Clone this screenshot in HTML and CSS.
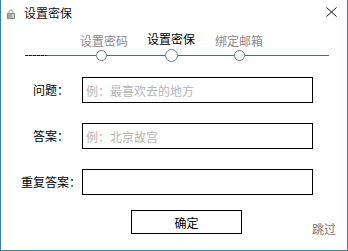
FILE: index.html
```html
<!DOCTYPE html>
<html lang="zh">
<head>
<meta charset="utf-8">
<link rel="stylesheet" href="styles.css">
</head>
<body>
<div class="window">
  <div class="titlebar">
    <svg class="lock" width="8" height="10" viewBox="0 0 8 10">
      <path d="M2 5 V3 A2 2 0 0 1 6 3 V5" fill="none" stroke="#9a9a9a" stroke-width="1"/>
      <rect x="0.5" y="4.5" width="7" height="5" fill="#a8a8a8" stroke="#8a8a8a" stroke-width="1"/>
      <rect x="5" y="5" width="2" height="4" fill="#d0d0d0"/>
    </svg>
    <span class="title">设置密保</span>
    <svg class="close" width="11" height="10" viewBox="0 0 11 10">
      <path d="M0.5 0.5 L10.5 9.5 M10.5 0.5 L0.5 9.5" stroke="#111" stroke-width="1"/>
    </svg>
  </div>

  <div class="steps">
    <div class="step-labels">
      <span class="step">设置密码</span>
      <span class="step active">设置密保</span>
      <span class="step">绑定邮箱</span>
    </div>
    <div class="track">
      <span class="seg dash"></span>
      <span class="seg s1"></span>
      <span class="dot"></span>
      <span class="seg s2"></span>
      <span class="dot big"></span>
      <span class="seg s3"></span>
      <span class="dot"></span>
      <span class="seg s4"></span>
    </div>
  </div>

  <div class="form">
    <label class="label l-short">问题：</label>
    <input class="field" type="text" placeholder="例：最喜欢去的地方">
    <label class="label l-short">答案：</label>
    <input class="field" type="text" placeholder="例：北京故宫">
    <label class="label l-long">重复答案：</label>
    <input class="field" type="text">
  </div>

  <div class="actions">
    <button class="ok" type="button">确定</button>
    <span class="skip">跳过</span>
  </div>
</div>
</body>
</html>
```
FILE: styles.css
```css
* { box-sizing: border-box; }
html, body { margin: 0; padding: 0; background: #fff; }
body {
  font-family: "Noto Sans CJK SC", "Noto Sans", sans-serif;
  font-size: 12px;
  color: #000;
}
.window {
  width: 348px;
  height: 251px;
  border-left: 1px solid #3a7fa6;
  border-right: 1px solid #3a7fa6;
  border-bottom: 1px solid #3a7fa6;
  background: #fff;
  display: flex;
  flex-direction: column;
}
.titlebar {
  height: 25px;
  display: flex;
  align-items: center;
  padding-left: 6px;
}
.lock { display: block; margin-top: 2px; }
.title {
  margin-left: 9px;
  line-height: 25px;
  color: #111;
}
.close { margin-left: auto; margin-right: 10px; display: block; margin-top: -2px; }

.steps { margin-top: 8px; }
.step-labels {
  display: flex;
  align-items: flex-end;
  padding-left: 79px;
  gap: 19px;
  height: 15px;
}
.step {
  line-height: 14px;
  color: #8a8a8a;
  letter-spacing: 0;
}
.step.active { color: #000; margin-bottom: 2px; }
.step:last-child { margin-left: 1px; }

.track {
  margin-top: 1px;
  height: 13px;
  display: flex;
  align-items: center;
  padding-left: 24px;
}
.seg { height: 1px; background: #3f6e7e; display: block; }
.seg.dash {
  width: 22px;
  background: repeating-linear-gradient(90deg, #1a1a1a 0 3px, #7a7a7a 3px 4px);
}
.s1 { width: 49px; }
.s2 { width: 58px; }
.s3 { width: 56px; }
.s4 { width: 84px; }
.dot {
  width: 11px;
  height: 11px;
  border-radius: 50%;
  border: 1px solid #5f8296;
  background: #fff;
  display: block;
}
.dot.big { width: 13px; height: 13px; }

.form {
  margin-top: 15px;
  display: grid;
  grid-template-columns: 81px 231px;
  row-gap: 20px;
  align-items: center;
}
.label {
  line-height: 14px;
  color: #000;
}
.l-short { padding-left: 32px; }
.l-long { padding-left: 20px; }
.field {
  height: 26px;
  width: 231px;
  border: 1px solid #000;
  padding: 0 3px;
  margin: 0;
  font-family: "Noto Sans CJK SC", "Noto Sans", sans-serif;
  font-size: 12px;
  outline: none;
  background: #fff;
}
.field::placeholder { color: #b4b4b4; }

.actions {
  margin-top: 15px;
  display: flex;
  align-items: flex-end;
  padding-left: 130px;
}
.ok {
  width: 111px;
  height: 24px;
  border: 1px solid #000;
  background: #fff;
  font-family: "Noto Sans CJK SC", "Noto Sans", sans-serif;
  font-size: 12px;
  color: #000;
  padding: 0;
  margin: 0;
  border-radius: 0;
}
.skip {
  margin-left: 70px;
  line-height: 14px;
  color: #777;
  margin-bottom: -2px;
}
```
